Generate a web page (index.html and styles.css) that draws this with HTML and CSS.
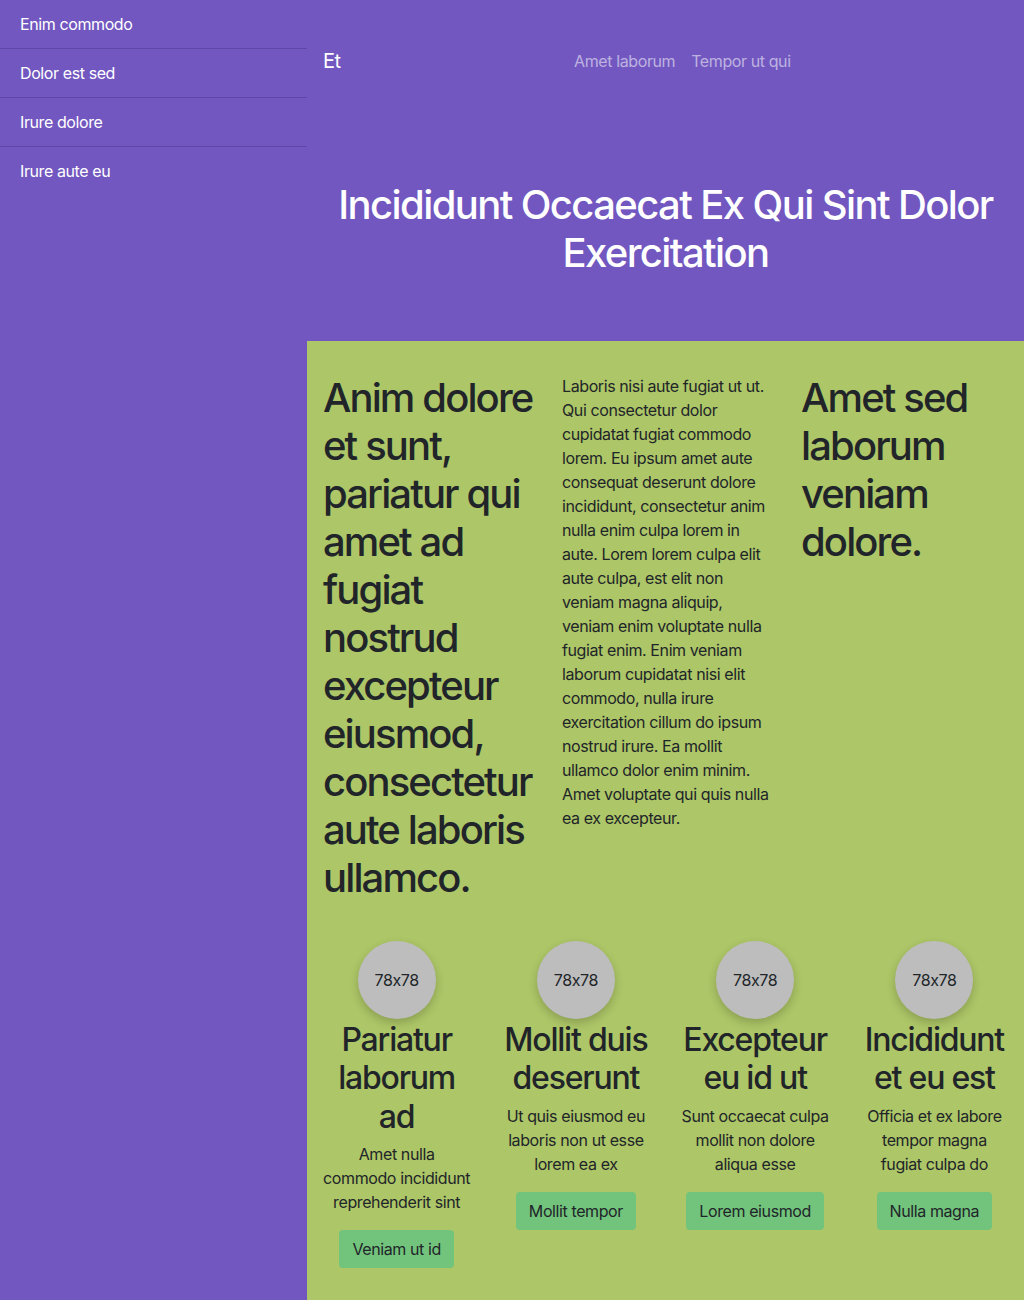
FILE: index.html
```html
<!DOCTYPE html>
<html lang="en">
<head>
<meta charset="utf-8">
<title>Et</title>
<link rel="stylesheet" href="styles.css">
</head>
<body>
<aside class="sidebar">
  <a class="side-link" href="#">Enim commodo</a>
  <a class="side-link" href="#">Dolor est sed</a>
  <a class="side-link" href="#">Irure dolore</a>
  <a class="side-link" href="#">Irure aute eu</a>
</aside>
<main class="main">
  <header class="hero">
    <nav class="navbar">
      <a class="brand" href="#">Et</a>
      <div class="nav-links">
        <a class="nav-link" href="#">Amet laborum</a>
        <a class="nav-link" href="#">Tempor ut qui</a>
      </div>
    </nav>
    <h1 class="hero-title">Incididunt Occaecat Ex Qui Sint Dolor Exercitation</h1>
  </header>
  <section class="content">
    <div class="cols">
      <h2 class="big">Anim dolore et sunt, pariatur qui amet ad fugiat nostrud excepteur eiusmod, consectetur aute laboris ullamco.</h2>
      <p class="text">Laboris nisi aute fugiat ut ut. Qui consectetur dolor cupidatat fugiat commodo lorem. Eu ipsum amet aute consequat deserunt dolore incididunt, consectetur anim nulla enim culpa lorem in aute. Lorem lorem culpa elit aute culpa, est elit non veniam magna aliquip, veniam enim voluptate nulla fugiat enim. Enim veniam laborum cupidatat nisi elit commodo, nulla irure exercitation cillum do ipsum nostrud irure. Ea mollit ullamco dolor enim minim. Amet voluptate qui quis nulla ea ex excepteur.</p>
      <h2 class="big">Amet sed laborum veniam dolore.</h2>
    </div>
    <div class="cards">
      <div class="card">
        <div class="avatar">78x78</div>
        <h3 class="card-title">Pariatur laborum ad</h3>
        <p class="card-text">Amet nulla commodo incididunt reprehenderit sint</p>
        <button class="btn">Veniam ut id</button>
      </div>
      <div class="card">
        <div class="avatar">78x78</div>
        <h3 class="card-title">Mollit duis deserunt</h3>
        <p class="card-text">Ut quis eiusmod eu laboris non ut esse lorem ea ex</p>
        <button class="btn">Mollit tempor</button>
      </div>
      <div class="card">
        <div class="avatar">78x78</div>
        <h3 class="card-title">Excepteur eu id ut</h3>
        <p class="card-text">Sunt occaecat culpa mollit non dolore aliqua esse</p>
        <button class="btn">Lorem eiusmod</button>
      </div>
      <div class="card">
        <div class="avatar">78x78</div>
        <h3 class="card-title">Incididunt et eu est</h3>
        <p class="card-text">Officia et ex labore tempor magna fugiat culpa do</p>
        <button class="btn">Nulla magna</button>
      </div>
    </div>
  </section>
</main>
</body>
</html>
```

FILE: styles.css
```css
* { box-sizing: border-box; }

html, body {
  margin: 0;
  padding: 0;
}

body {
  display: flex;
  min-height: 100vh;
  background: #7157bf;
  font-family: Inter, "Noto Sans", "Liberation Sans", sans-serif;
  font-feature-settings: "calt" 0;
  letter-spacing: -0.025em;
  font-size: 16px;
  line-height: 24px;
  color: #212529;
}

a { text-decoration: none; }

.sidebar {
  width: 307px;
  flex-shrink: 0;
  display: flex;
  flex-direction: column;
  background: #7157bf;
}

.side-link {
  display: block;
  padding: 12px 20px;
  line-height: 24px;
  color: #fff;
  border-bottom: 1px solid #5e48a6;
}

.side-link:last-child { border-bottom: none; }

.main {
  flex: 1;
  display: flex;
  flex-direction: column;
  min-width: 0;
}

.hero {
  padding: 46px 16px 64px;
  background: #7157bf;
}

.navbar {
  display: flex;
  align-items: center;
  height: 30px;
}

.brand {
  font-size: 20px;
  line-height: 30px;
  color: #fff;
  margin-right: 16px;
}

.nav-links {
  display: flex;
  margin: 0 auto;
}

.nav-link {
  padding: 8px;
  line-height: 24px;
  color: rgba(255, 255, 255, 0.55);
}

.hero-title {
  margin: 105px 0 0;
  font-size: 40px;
  line-height: 48px;
  font-weight: 500;
  letter-spacing: -0.04em;
  color: #fff;
  text-align: center;
}

.content {
  flex: 1;
  background: #adc667;
  padding: 33px 16px 32px;
}

.cols {
  display: grid;
  grid-template-columns: repeat(3, minmax(0, 1fr));
  column-gap: 28px;
  margin-right: -4px;
  align-items: start;
}

.big {
  margin: 0;
  font-size: 40px;
  line-height: 48px;
  font-weight: 500;
  letter-spacing: -0.047em;
}

.text {
  margin: 0;
}

.cards {
  display: grid;
  grid-template-columns: repeat(4, minmax(0, 1fr));
  column-gap: 32px;
  margin-top: 39px;
  align-items: start;
}

.card {
  display: flex;
  flex-direction: column;
  align-items: center;
  text-align: center;
}

.avatar {
  width: 78px;
  height: 78px;
  border-radius: 50%;
  background: #bdbdbd;
  display: flex;
  align-items: center;
  justify-content: center;
  box-shadow: 0 4px 10px rgba(0, 0, 0, 0.2);
  color: #212529;
}

.card-title {
  margin: 2px 0 6px;
  font-size: 32px;
  line-height: 38.4px;
  font-weight: 500;
  letter-spacing: -0.038em;
}

.card-text {
  margin: 0 0 16px;
}

.btn {
  font-family: inherit;
  letter-spacing: inherit;
  font-size: 16px;
  line-height: 24px;
  padding: 7px 13px;
  border: none;
  border-radius: 4px;
  background: #72c47c;
  color: #212529;
}
```
